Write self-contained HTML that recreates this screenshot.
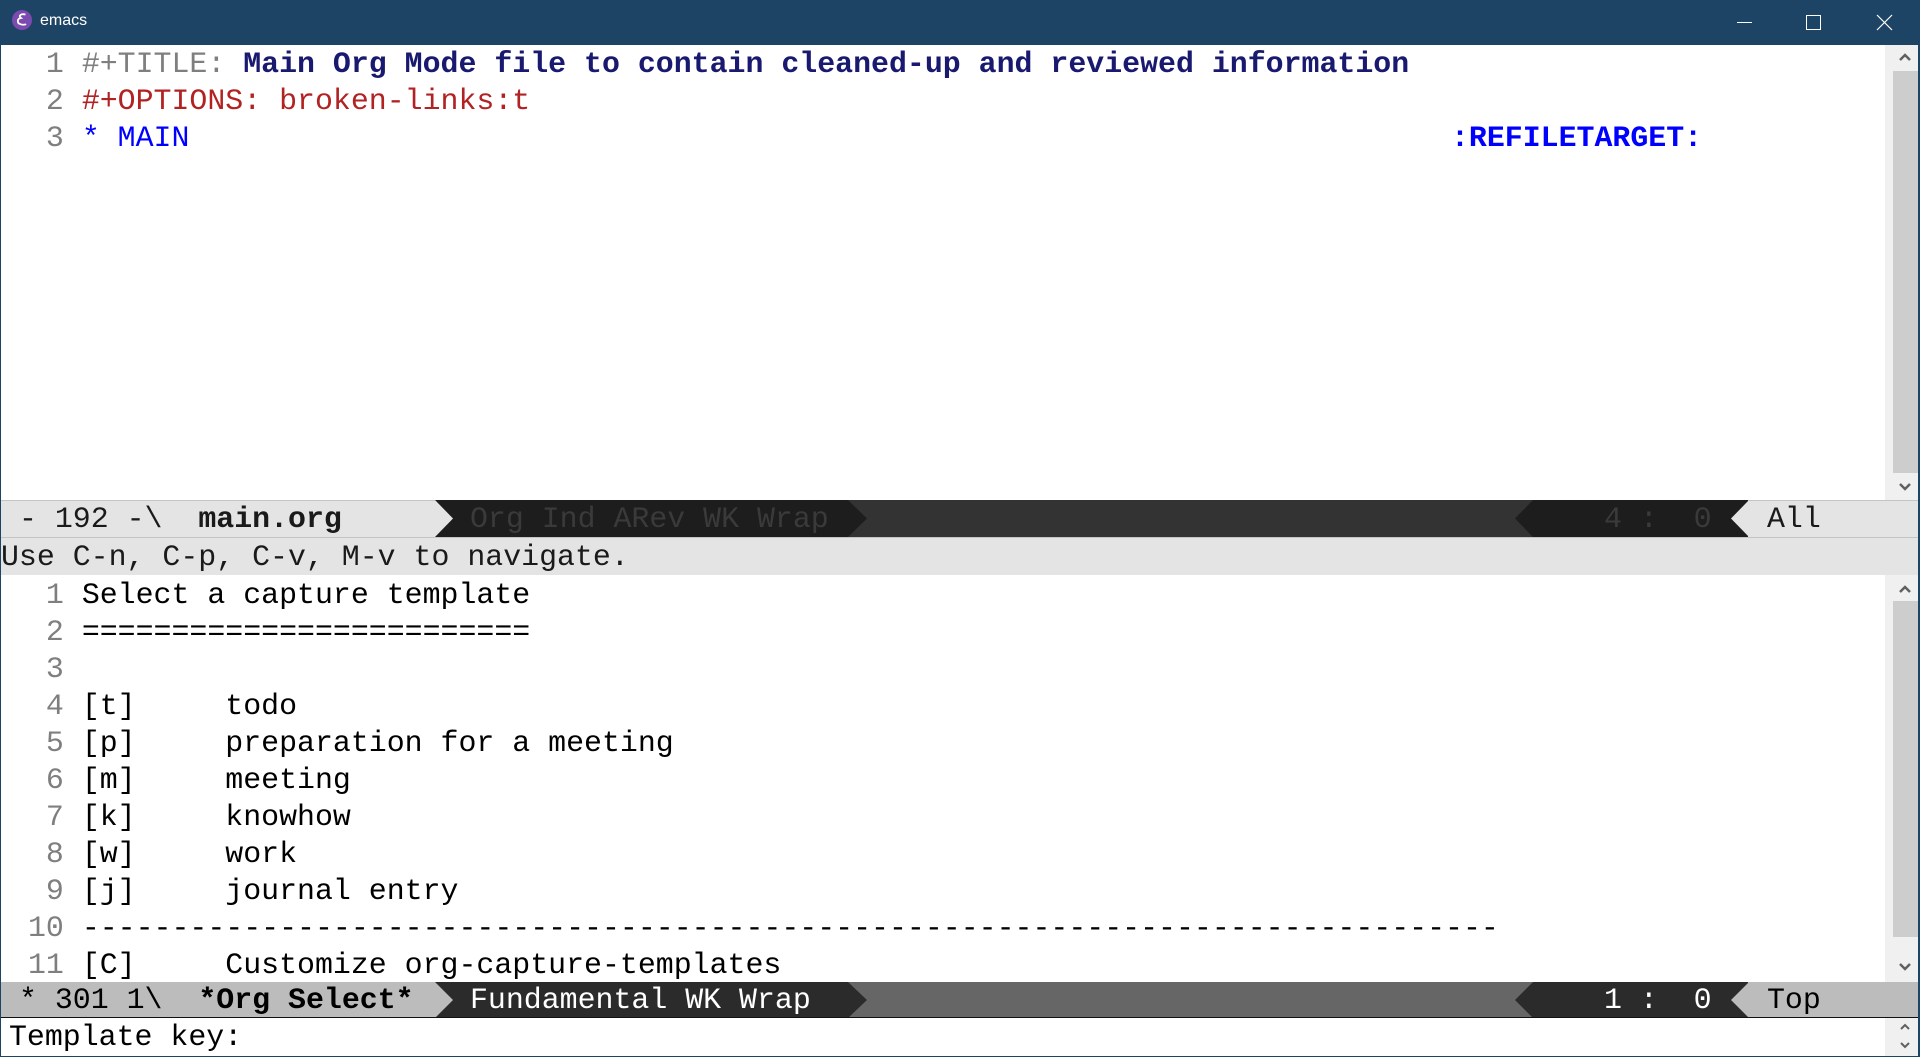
<!DOCTYPE html>
<html><head><meta charset="utf-8"><style>
*{margin:0;padding:0;box-sizing:border-box}
body{width:1920px;height:1057px;overflow:hidden;background:#1e4465;position:relative;font-family:"Liberation Mono","DejaVu Sans Mono",monospace}
.abs{position:absolute}
.t{position:absolute;white-space:pre;font-size:29.9px;line-height:37px;height:37px;padding-top:1px}
.ln{color:#7f7f7f}
.sb{position:absolute;left:1885px;width:8px;background:#f0f0f0}
.bar{position:absolute;left:1893px;width:25px;background:#f0f0f0}
.thumb{position:absolute;left:1893px;width:25px;background:#cdcdcd}
.arr{position:absolute;left:1898px;width:14px;height:14px}
</style></head><body>
<div class="abs" style="left:0;top:0;width:1920px;height:45px;background:#1e4465"></div>
<svg class="abs" style="left:11px;top:9px" width="22" height="22" viewBox="0 0 22 22"><circle cx="11" cy="11" r="10" fill="#7b4bb0"/><path d="M14.5 5.5 C10 4.5 7 6.5 10 9 C6 9.5 6 14 9 15 C11 16 14 16 15 15" stroke="#fff" stroke-width="1.8" fill="none"/></svg>
<div class="abs" style="left:40px;top:12px;color:#fff;font:16px 'Liberation Sans',sans-serif">emacs</div>
<div class="abs" style="left:1737px;top:22px;width:15px;height:1px;background:#fff"></div>
<div class="abs" style="left:1806px;top:15px;width:15px;height:15px;border:1px solid #fff"></div>
<svg class="abs" style="left:1876px;top:14px" width="17" height="17"><path d="M1 1L16 16M16 1L1 16" stroke="#fff" stroke-width="1.2"/></svg>

<div class="abs" style="left:1px;top:45px;width:1917px;height:455px;background:#fff"></div>
<div class="t" style="left:28px;top:45px"><span class="ln"> 1 </span><span style="color:#7f7f7f">#+TITLE: </span><b style="color:#191970">Main Org Mode file to contain cleaned-up and reviewed information</b></div>
<div class="t" style="left:28px;top:82px"><span class="ln"> 2 </span><span style="color:#b22222">#+OPTIONS: broken-links:t</span></div>
<div class="t" style="left:28px;top:119px"><span class="ln"> 3 </span><span style="color:#0000ff">* MAIN</span></div>
<div class="t" style="left:1451px;top:119px;color:#0000ff;font-weight:bold">:REFILETARGET:</div>
<div class="sb" style="top:45px;height:455px"></div>
<div class="bar" style="top:45px;height:455px"></div>
<div class="thumb" style="top:71px;height:402px"></div>
<svg class="arr" style="top:50px"><path d="M2 10L7 5L12 10" stroke="#606060" stroke-width="2.5" fill="none"/></svg>
<svg class="arr" style="top:480px"><path d="M2 4L7 9L12 4" stroke="#606060" stroke-width="2.5" fill="none"/></svg>

<div class="abs" style="left:1px;top:500px;width:1917px;height:37px;background:#333"></div>
<div class="abs" style="left:1px;top:500px;width:434px;height:37px;background:#e4e4e4"></div>
<div class="abs" style="left:435px;top:500px;width:413px;height:37px;background:#1d1d1d"></div>
<svg class="abs" style="left:435px;top:500px" width="19" height="37"><path d="M0 0L18 18.5L0 37Z" fill="#e4e4e4"/></svg>
<svg class="abs" style="left:848px;top:500px" width="20" height="37"><path d="M0 0L19 18.5L0 37Z" fill="#1d1d1d"/></svg>
<div class="abs" style="left:1533px;top:500px;width:215px;height:37px;background:#1d1d1d"></div>
<svg class="abs" style="left:1514px;top:500px" width="20" height="37"><path d="M19 0L1 18.5L19 37Z" fill="#1d1d1d"/></svg>
<div class="abs" style="left:1748px;top:500px;width:170px;height:37px;background:#e4e4e4"></div>
<svg class="abs" style="left:1730px;top:500px" width="19" height="37"><path d="M19 0L1 18.5L19 37Z" fill="#e4e4e4"/></svg>
<div class="abs" style="left:1px;top:500px;width:434px;height:1px;background:#c4c4c4"></div>
<div class="abs" style="left:1748px;top:500px;width:170px;height:1px;background:#c4c4c4"></div>
<div class="t" style="left:19px;top:500px;color:#1a1a1a">- 192 -\  <b>main.org</b></div>
<div class="t" style="left:470px;top:500px;color:#3a3a3a">Org Ind ARev WK Wrap</div>
<div class="t" style="left:1604px;top:500px;color:#3a3a3a">4 :  0</div>
<div class="t" style="left:1767px;top:500px;color:#1a1a1a">All</div>

<div class="abs" style="left:1px;top:537px;width:1917px;height:38px;background:#e4e4e4;border-top:1px solid #c4c4c4"></div>
<div class="t" style="left:1px;top:538px;color:#1a1a1a">Use C-n, C-p, C-v, M-v to navigate.</div>

<div class="abs" style="left:1px;top:575px;width:1917px;height:407px;background:#fff"></div>
<div class="t" style="left:28px;top:576px;color:#000"><span class="ln"> 1 </span>Select a capture template</div>
<div class="t" style="left:28px;top:613px;color:#000"><span class="ln"> 2 </span>=========================</div>
<div class="t" style="left:28px;top:650px;color:#000"><span class="ln"> 3 </span></div>
<div class="t" style="left:28px;top:687px;color:#000"><span class="ln"> 4 </span>[t]     todo</div>
<div class="t" style="left:28px;top:724px;color:#000"><span class="ln"> 5 </span>[p]     preparation for a meeting</div>
<div class="t" style="left:28px;top:761px;color:#000"><span class="ln"> 6 </span>[m]     meeting</div>
<div class="t" style="left:28px;top:798px;color:#000"><span class="ln"> 7 </span>[k]     knowhow</div>
<div class="t" style="left:28px;top:835px;color:#000"><span class="ln"> 8 </span>[w]     work</div>
<div class="t" style="left:28px;top:872px;color:#000"><span class="ln"> 9 </span>[j]     journal entry</div>
<div class="t" style="left:28px;top:909px;color:#000"><span class="ln">10 </span>-------------------------------------------------------------------------------</div>
<div class="t" style="left:28px;top:946px;color:#000"><span class="ln">11 </span>[C]     Customize org-capture-templates</div>
<div class="sb" style="top:575px;height:407px"></div>
<div class="bar" style="top:575px;height:407px"></div>
<div class="thumb" style="top:601px;height:336px"></div>
<svg class="arr" style="top:582px"><path d="M2 10L7 5L12 10" stroke="#606060" stroke-width="2.5" fill="none"/></svg>
<svg class="arr" style="top:960px"><path d="M2 4L7 9L12 4" stroke="#606060" stroke-width="2.5" fill="none"/></svg>

<div class="abs" style="left:1px;top:982px;width:1917px;height:36px;background:#666"></div>
<div class="abs" style="left:1px;top:982px;width:434px;height:36px;background:#bcbcbc"></div>
<div class="abs" style="left:435px;top:982px;width:413px;height:36px;background:#2b2b2b"></div>
<svg class="abs" style="left:435px;top:982px" width="19" height="36"><path d="M0 0L18 18L0 36Z" fill="#bcbcbc"/></svg>
<svg class="abs" style="left:848px;top:982px" width="20" height="36"><path d="M0 0L19 18L0 36Z" fill="#2b2b2b"/></svg>
<div class="abs" style="left:1533px;top:982px;width:215px;height:36px;background:#2b2b2b"></div>
<svg class="abs" style="left:1514px;top:982px" width="20" height="36"><path d="M19 0L1 18L19 36Z" fill="#2b2b2b"/></svg>
<div class="abs" style="left:1748px;top:982px;width:170px;height:36px;background:#bcbcbc"></div>
<svg class="abs" style="left:1730px;top:982px" width="19" height="36"><path d="M19 0L1 18L19 36Z" fill="#bcbcbc"/></svg>
<div class="abs" style="left:1px;top:1017px;width:1917px;height:1px;background:#111"></div>
<div class="t" style="left:19px;top:981px;color:#000">* 301 1\  <b>*Org Select*</b></div>
<div class="t" style="left:470px;top:981px;color:#fff">Fundamental WK Wrap</div>
<div class="t" style="left:1604px;top:981px;color:#fff">1 :  0</div>
<div class="t" style="left:1767px;top:981px;color:#000">Top</div>

<div class="abs" style="left:1px;top:1018px;width:1917px;height:38px;background:#fff"></div>
<div class="t" style="left:9px;top:1018px;color:#000">Template key:</div>
<div class="sb" style="top:1018px;height:38px"></div>
<div class="bar" style="top:1018px;height:38px"></div>
<svg class="arr" style="top:1020px;height:12px"><path d="M3 9L7 5L11 9" stroke="#606060" stroke-width="2" fill="none"/></svg>
<svg class="arr" style="top:1040px;height:12px"><path d="M3 3L7 7L11 3" stroke="#606060" stroke-width="2" fill="none"/></svg>
</body></html>
